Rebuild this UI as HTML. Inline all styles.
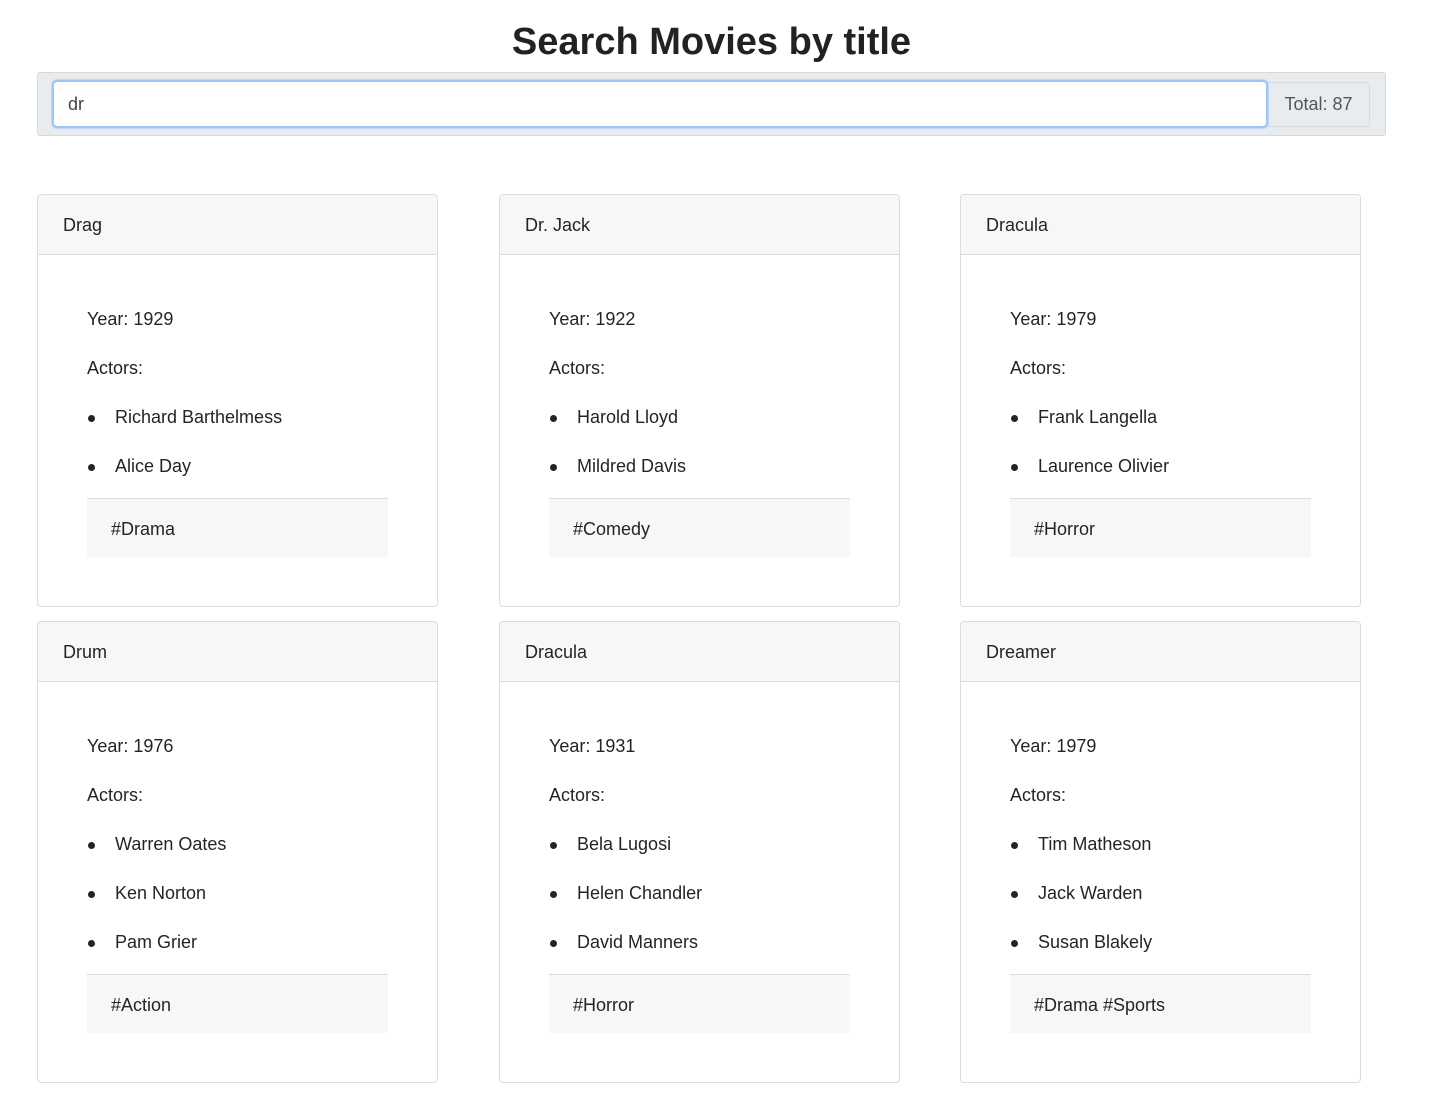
<!DOCTYPE html>
<html><head><style>
body{margin:0;background:#fff;font-family:"Liberation Sans",sans-serif;color:#212529;width:1447px;height:1094px;overflow:hidden;position:relative}
h1{position:absolute;top:16px;left:0;width:1423px;text-align:center;margin:0;font-size:38px;font-weight:bold;line-height:52px;color:#222}
.bar{position:absolute;left:37px;top:72px;width:1347px;height:62px;background:#e9ecef;border:1px solid #d6d9dc;border-radius:3px}
.inp{position:absolute;left:14px;top:7px;width:1216px;height:48px;box-sizing:border-box;background:#fff;border:2px solid #9ec5f3;border-radius:5px;box-shadow:0 0 0 1px #bcd7f7;font-size:18px;line-height:44px;padding-left:14px;color:#444}
.add{position:absolute;left:1230px;top:9px;width:101px;height:43px;border:1px solid #d6d9dc;border-left:none;border-radius:0 3px 3px 0;font-size:18px;line-height:43px;text-align:center;color:#555}
.card{position:absolute;width:399px;border:1px solid #dcdcdc;border-radius:4px;background:#fff;overflow:hidden}
.hd{height:59px;background:#f7f7f7;border-bottom:1px solid #dcdcdc;font-size:18px;line-height:60px;padding-left:25px}
.bd{padding:51px 49px 49px 49px;font-size:18px}
.bd p{margin:0 0 22px;line-height:27px}
.bd ul{margin:0;padding-left:28px;list-style:none}
.bd li{line-height:27px;margin-bottom:22px;position:relative}
.bd li::before{content:"";position:absolute;left:-27px;top:11px;width:7px;height:7px;border-radius:50%;background:#212529}
.bd li:last-child{margin-bottom:18px}
.tag{height:58px;border-top:1px solid #dcdcdc;background:#f7f7f7;line-height:60px;padding-left:24px}
</style></head><body>
<h1>Search Movies by title</h1>
<div class="bar"><div class="inp">dr</div><div class="add">Total: 87</div></div>

<div class="card" style="left:37px;top:194px"><div class="hd">Drag</div><div class="bd"><p>Year: 1929</p><p>Actors:</p><ul><li>Richard Barthelmess</li><li>Alice Day</li></ul><div class="tag">#Drama</div></div></div>
<div class="card" style="left:499px;top:194px"><div class="hd">Dr. Jack</div><div class="bd"><p>Year: 1922</p><p>Actors:</p><ul><li>Harold Lloyd</li><li>Mildred Davis</li></ul><div class="tag">#Comedy</div></div></div>
<div class="card" style="left:960px;top:194px"><div class="hd">Dracula</div><div class="bd"><p>Year: 1979</p><p>Actors:</p><ul><li>Frank Langella</li><li>Laurence Olivier</li></ul><div class="tag">#Horror</div></div></div>

<div class="card" style="left:37px;top:621px"><div class="hd">Drum</div><div class="bd"><p>Year: 1976</p><p>Actors:</p><ul><li>Warren Oates</li><li>Ken Norton</li><li>Pam Grier</li></ul><div class="tag">#Action</div></div></div>
<div class="card" style="left:499px;top:621px"><div class="hd">Dracula</div><div class="bd"><p>Year: 1931</p><p>Actors:</p><ul><li>Bela Lugosi</li><li>Helen Chandler</li><li>David Manners</li></ul><div class="tag">#Horror</div></div></div>
<div class="card" style="left:960px;top:621px"><div class="hd">Dreamer</div><div class="bd"><p>Year: 1979</p><p>Actors:</p><ul><li>Tim Matheson</li><li>Jack Warden</li><li>Susan Blakely</li></ul><div class="tag">#Drama #Sports</div></div></div>
</body></html>
